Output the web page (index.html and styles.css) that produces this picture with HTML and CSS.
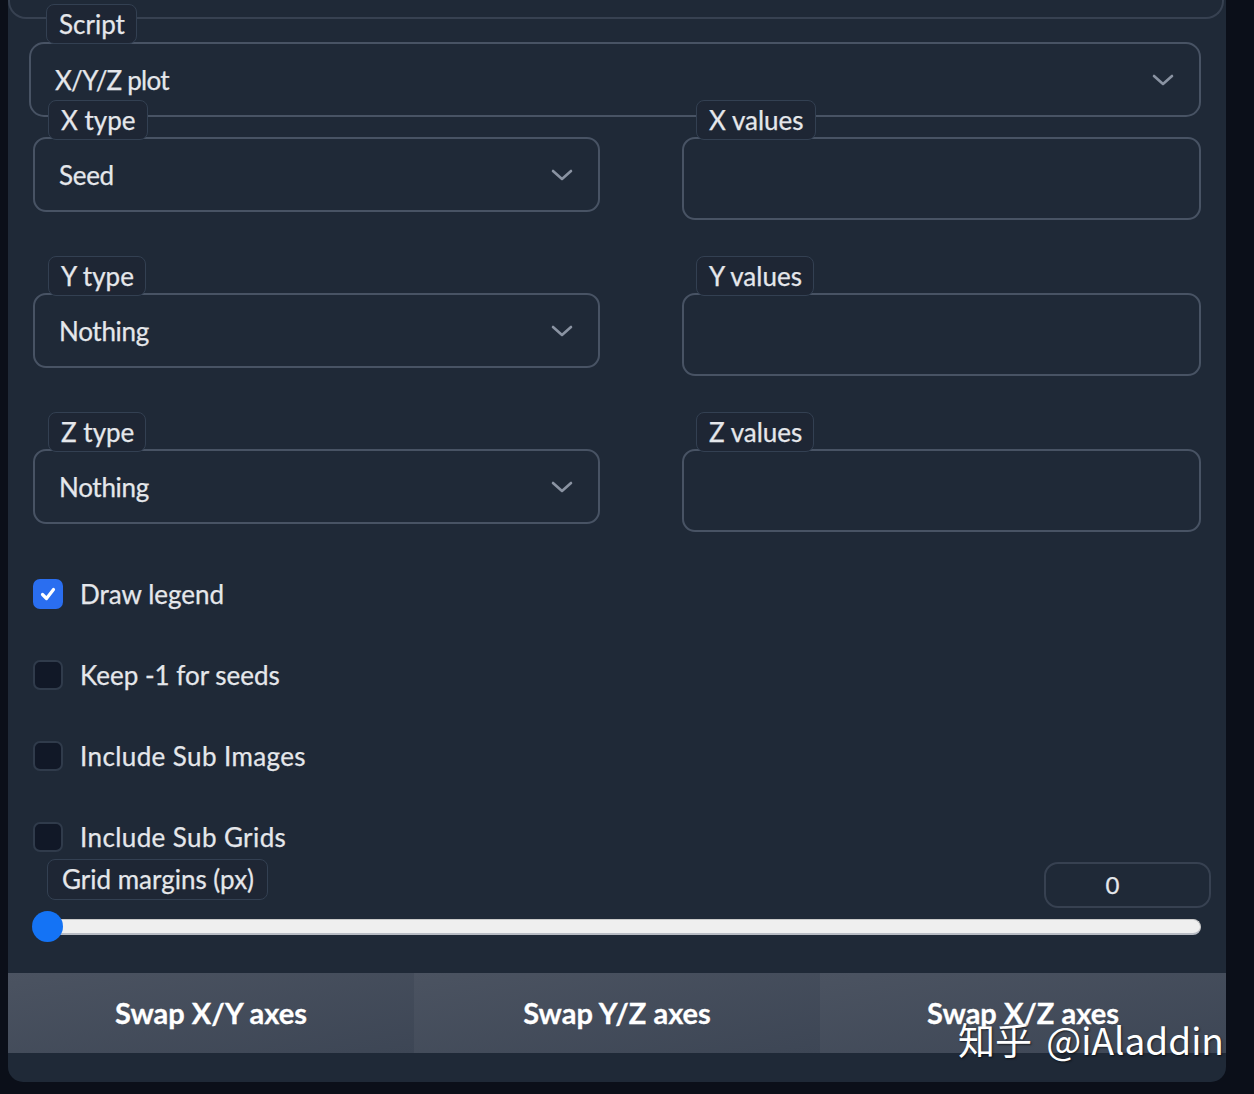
FILE: index.html
```html
<!DOCTYPE html>
<html>
<head>
<meta charset="utf-8">
<link rel="stylesheet" href="styles.css">
</head>
<body>
<div class="panel">
  <div class="prev"></div>
  <div class="field script">
    <span class="label">Script</span>
    <div class="select big"><span>X/Y/Z plot</span><svg class="chev" width="22" height="12" viewBox="0 0 22 12"><path d="M2 2 L11 10 L20 2"/></svg></div>
  </div>
  <div class="grid">
    <div class="field left">
      <span class="label">X type</span>
      <div class="select"><span>Seed</span><svg class="chev" width="22" height="12" viewBox="0 0 22 12"><path d="M2 2 L11 10 L20 2"/></svg></div>
    </div>
    <div class="field right">
      <span class="label">X values</span>
      <div class="textbox"></div>
    </div>
    <div class="field left">
      <span class="label">Y type</span>
      <div class="select"><span>Nothing</span><svg class="chev" width="22" height="12" viewBox="0 0 22 12"><path d="M2 2 L11 10 L20 2"/></svg></div>
    </div>
    <div class="field right">
      <span class="label">Y values</span>
      <div class="textbox"></div>
    </div>
    <div class="field left">
      <span class="label">Z type</span>
      <div class="select"><span>Nothing</span><svg class="chev" width="22" height="12" viewBox="0 0 22 12"><path d="M2 2 L11 10 L20 2"/></svg></div>
    </div>
    <div class="field right">
      <span class="label">Z values</span>
      <div class="textbox"></div>
    </div>
  </div>
  <div class="checks">
    <div class="check"><span class="box on"><svg width="20" height="20" viewBox="0 0 20 20"><path d="M4.5 10.5 L8.5 14.5 L15.5 5.5"/></svg></span><span>Draw legend</span></div>
    <div class="check"><span class="box"></span><span>Keep -1 for seeds</span></div>
    <div class="check"><span class="box"></span><span class="wide">Include Sub Images</span></div>
    <div class="check"><span class="box"></span><span class="wide">Include Sub Grids</span></div>
  </div>
  <div class="slider-block">
    <div class="slider-head">
      <span class="label">Grid margins (px)</span>
      <div class="num">0</div>
    </div>
    <div class="track"><span class="thumb"></span></div>
  </div>
  <div class="buttons">
    <div class="btn">Swap X/Y axes</div>
    <div class="btn">Swap Y/Z axes</div>
    <div class="btn">Swap X/Z axes</div>
  </div>
  <div class="watermark">知乎 @iAladdin</div>
</div>
</body>
</html>
```
FILE: styles.css
```css
html, body {
  margin: 0;
  padding: 0;
  background: #0b0f19;
  height: 1094px;
  overflow: hidden;
}
body {
  font-family: Lato, "Noto Sans", "Noto Sans CJK SC", sans-serif;
  color: #e5e7eb;
  font-size: 26px;
  -webkit-text-stroke: 0.25px #e5e7eb;
}
.panel {
  position: relative;
  margin-left: 8px;
  width: 1218px;
  background: #1f2937;
  border-radius: 0 0 15px 15px;
  padding-bottom: 29px;
}
.prev {
  width: 1216px;
  height: 19px;
  box-sizing: border-box;
  border: 2px solid #374151;
  border-top: none;
  border-radius: 0 0 18px 18px;
}
.field {
  display: flex;
  flex-direction: column;
  align-items: flex-start;
}
.label {
  position: relative;
  z-index: 1;
  box-sizing: border-box;
  height: 40px;
  line-height: 38px;
  padding: 0 11px 0 12px;
  background: #1e2634;
  border: 1px solid #334052;
  border-radius: 8px;
  color: #e5e7eb;
  white-space: nowrap;
}
.select, .textbox {
  align-self: stretch;
  box-sizing: border-box;
  border: 2px solid #485364;
  border-radius: 13px;
  background: #1f2937;
}
.select {
  height: 75px;
  display: flex;
  align-items: center;
  justify-content: space-between;
  padding: 0 25px 0 24px;
  margin-top: -3px;
}
.select > span {
  letter-spacing: -0.3px;
}
.chev path {
  fill: none;
  stroke: #8a93a2;
  stroke-width: 2.6;
  stroke-linecap: round;
  stroke-linejoin: round;
}
.script {
  margin-top: -15px;
  padding-left: 21px;
  width: 1172px;
}
.script .label {
  margin-left: 17px;
}
.script .select {
  margin-top: -2px;
  border-radius: 15px;
}
.script .select > span {
  letter-spacing: -0.8px;
}
.grid {
  margin-top: -17px;
  padding-left: 25px;
  display: grid;
  grid-template-columns: 567px 519px;
  column-gap: 82px;
  row-gap: 36px;
  align-items: start;
}
.left .label { margin-left: 15px; }
.right .label { margin-left: 14px; }
.textbox {
  height: 83px;
  margin-top: -3px;
}
.checks {
  margin-top: 47px;
  padding-left: 25px;
  display: flex;
  flex-direction: column;
  gap: 51px;
}
.check {
  display: flex;
  align-items: center;
  height: 30px;
  gap: 17px;
}
.check .wide {
  letter-spacing: 0.4px;
}
.box {
  width: 30px;
  height: 30px;
  box-sizing: border-box;
  border: 2px solid #303b4b;
  border-radius: 7px;
  background: #111827;
  display: flex;
  align-items: center;
  justify-content: center;
}
.box.on {
  background: #2a6ef0;
  border-color: #2a6ef0;
}
.box svg path {
  fill: none;
  stroke: #ffffff;
  stroke-width: 3.2;
  stroke-linecap: round;
  stroke-linejoin: round;
}
.slider-block {
  margin-top: 7px;
  padding-left: 25px;
  padding-right: 15px;
}
.slider-head {
  display: flex;
  justify-content: space-between;
  align-items: flex-start;
}
.slider-head .label {
  margin-left: 14px;
  height: 41px;
  line-height: 39px;
  padding: 0 13px 0 14px;
}
.num {
  margin-top: 3px;
  width: 167px;
  height: 46px;
  box-sizing: border-box;
  border: 2px solid #374151;
  border-radius: 14px;
  padding-right: 30px;
  text-align: center;
  line-height: 42px;
  font-size: 24px;
}
.track {
  position: relative;
  margin-top: 11px;
  width: 1168px;
  height: 16px;
  box-sizing: border-box;
  background: #efefef;
  border: 1px solid #c9c9c9;
  border-bottom: 2px solid #b8bcc4;
  border-radius: 8px;
}
.thumb {
  position: absolute;
  left: -2px;
  top: -9px;
  width: 31px;
  height: 31px;
  border-radius: 50%;
  background: #1473f5;
}
.buttons {
  margin-top: 38px;
  display: flex;
  height: 80px;
}
.btn {
  flex: 1;
  display: flex;
  align-items: center;
  justify-content: center;
  background: linear-gradient(to bottom right, #4b5361, #3d4655);
  color: #ffffff;
  -webkit-text-stroke: 0.3px #ffffff;
  font-weight: 700;
  font-size: 29px;
  padding-bottom: 2px;
  box-sizing: border-box;
}
.watermark {
  position: absolute;
  left: 950px;
  top: 1021px;
  font-family: "Noto Sans CJK SC", "Noto Sans", sans-serif;
  font-size: 37px;
  line-height: 1;
  color: #ffffff;
  -webkit-text-stroke: 0;
  text-shadow: 1px 1px 2px rgba(0,0,0,0.6);
  white-space: nowrap;
  word-spacing: 6px;
}
```
